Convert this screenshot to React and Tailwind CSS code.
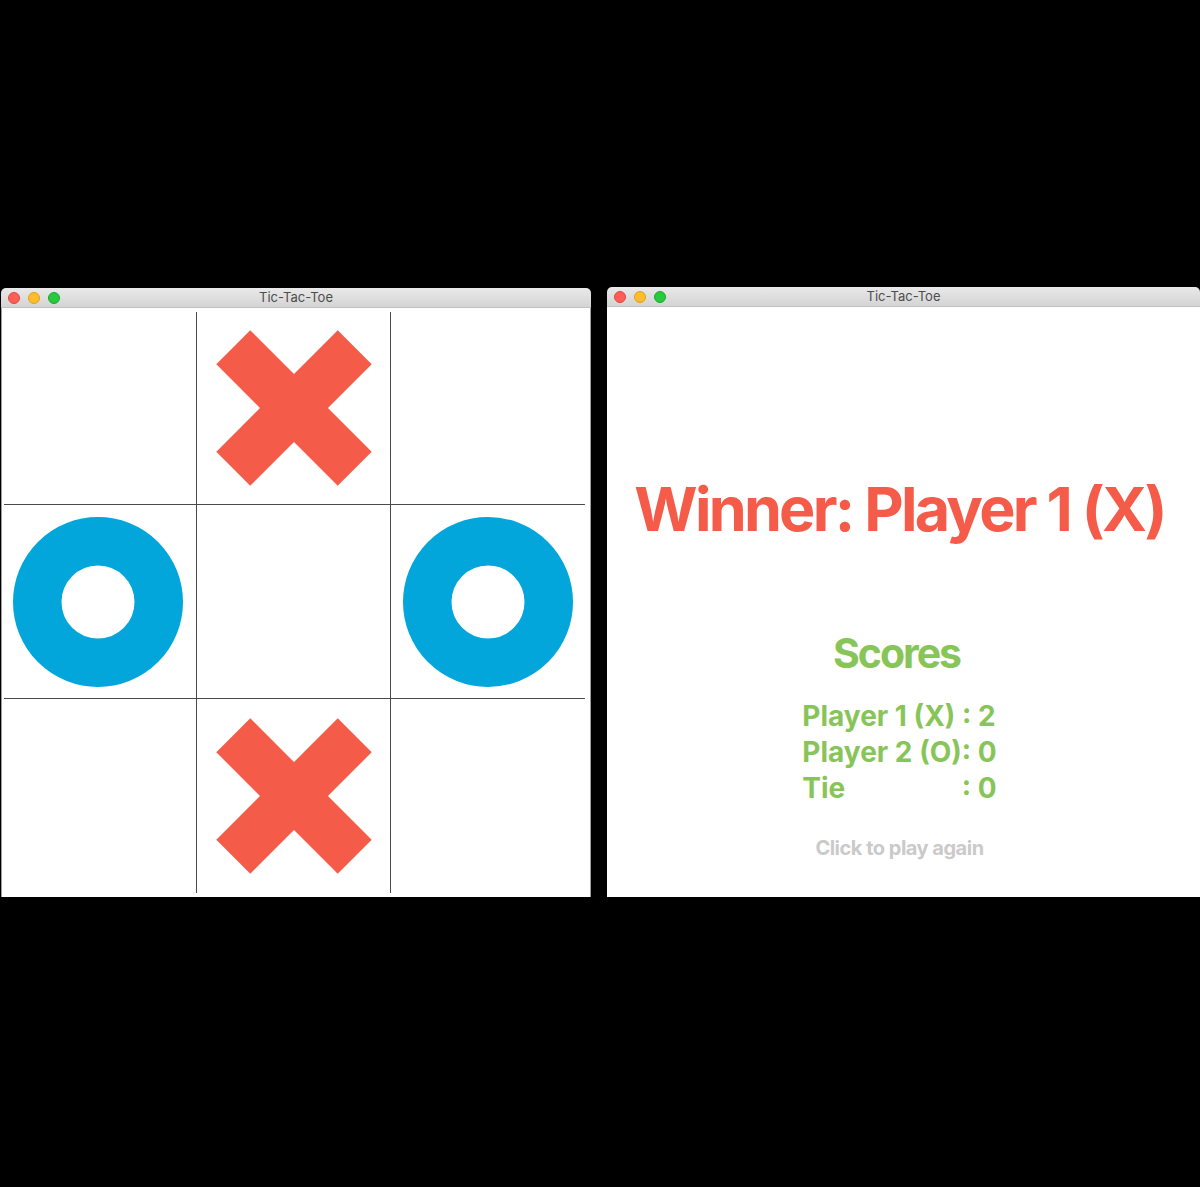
const RED = '#f45b48'
const BLUE = '#02a6da'

function TrafficLights() {
  return (
    <div className="flex items-center gap-[8px] pl-[7px]">
      <span className="w-[12px] h-[12px] rounded-full bg-[#fd5f57] border border-[#e2463f]" />
      <span className="w-[12px] h-[12px] rounded-full bg-[#febc2e] border border-[#e1a116]" />
      <span className="w-[12px] h-[12px] rounded-full bg-[#28c840] border border-[#1aab29]" />
    </div>
  )
}

function TitleBar({ title }) {
  return (
    <div className="relative h-[20px] rounded-t-[5px] bg-linear-to-b from-[#e9e9e9] to-[#d4d4d4] border-b border-[#c2c2c2] flex items-center">
      <TrafficLights />
      <span className="absolute inset-0 flex items-center justify-center text-[13px] text-[#4d4d4d] font-['Inter',sans-serif]">
        {title}
      </span>
    </div>
  )
}

function Cross() {
  return (
    <svg width="156" height="156" viewBox="0 0 156 156">
      <line x1="17.3" y1="17.3" x2="138.7" y2="138.7" stroke={RED} strokeWidth="48" />
      <line x1="138.7" y1="17.3" x2="17.3" y2="138.7" stroke={RED} strokeWidth="48" />
    </svg>
  )
}

function Ring() {
  return (
    <svg width="172" height="172" viewBox="0 0 172 172">
      <circle cx="86" cy="86" r="60.75" fill="none" stroke={BLUE} strokeWidth="48.5" />
    </svg>
  )
}

const board = ['', 'x', '', 'o', '', 'o', '', 'x', '']

function Board() {
  return (
    <div className="grid grid-cols-[193px_194px_194px] grid-rows-[193px_194px_194px] w-[581px] h-[581px]">
      {board.map((v, i) => {
        const col = i % 3
        const row = Math.floor(i / 3)
        return (
          <div
            key={i}
            className={
              'flex items-center justify-center border-[#4a4a4a] ' +
              (col === 0 ? 'pr-[4px] ' : '') +
              (col < 2 ? 'border-r ' : '') +
              (row < 2 ? 'border-b' : '')
            }
          >
            {v === 'x' && <Cross />}
            {v === 'o' && <Ring />}
          </div>
        )
      })}
    </div>
  )
}

export default function App() {
  return (
    <div className="w-[1200px] h-[1187px] bg-black overflow-hidden flex items-start pt-[287px]">
      <div className="ml-[1px] mt-[1px] w-[590px] shrink-0">
        <TitleBar title="Tic-Tac-Toe" />
        <div className="h-[589px] bg-white border-x border-[#9c9c9c] pl-[2px] pt-[4px]">
          <Board />
        </div>
      </div>

      <div className="ml-[16px] w-[593px] shrink-0">
        <TitleBar title="Tic-Tac-Toe" />
        <div className="h-[590px] bg-white flex flex-col items-center pr-[8px] font-['Inter',sans-serif] font-bold">
          <h1 className="mt-[172px] text-[61px] leading-none tracking-[-0.045em] text-[#f45b48]">
            Winner: Player 1 (X)
          </h1>
          <h2 className="mt-[93px] pr-[6px] text-[41px] leading-none tracking-[-0.05em] text-[#88c559]">Scores</h2>
          <div className="mt-[24px] text-[28px] leading-[36px] text-[#88c559]">
            <p>Player 1 (X) : 2</p>
            <p>Player 2 (O): 0</p>
            <p className="flex justify-between">
              <span>Tie</span>
              <span>: 0</span>
            </p>
          </div>
          <p className="mt-[32px] text-[20px] leading-none tracking-[-0.025em] text-[#cacaca]">Click to play again</p>
        </div>
      </div>
    </div>
  )
}
